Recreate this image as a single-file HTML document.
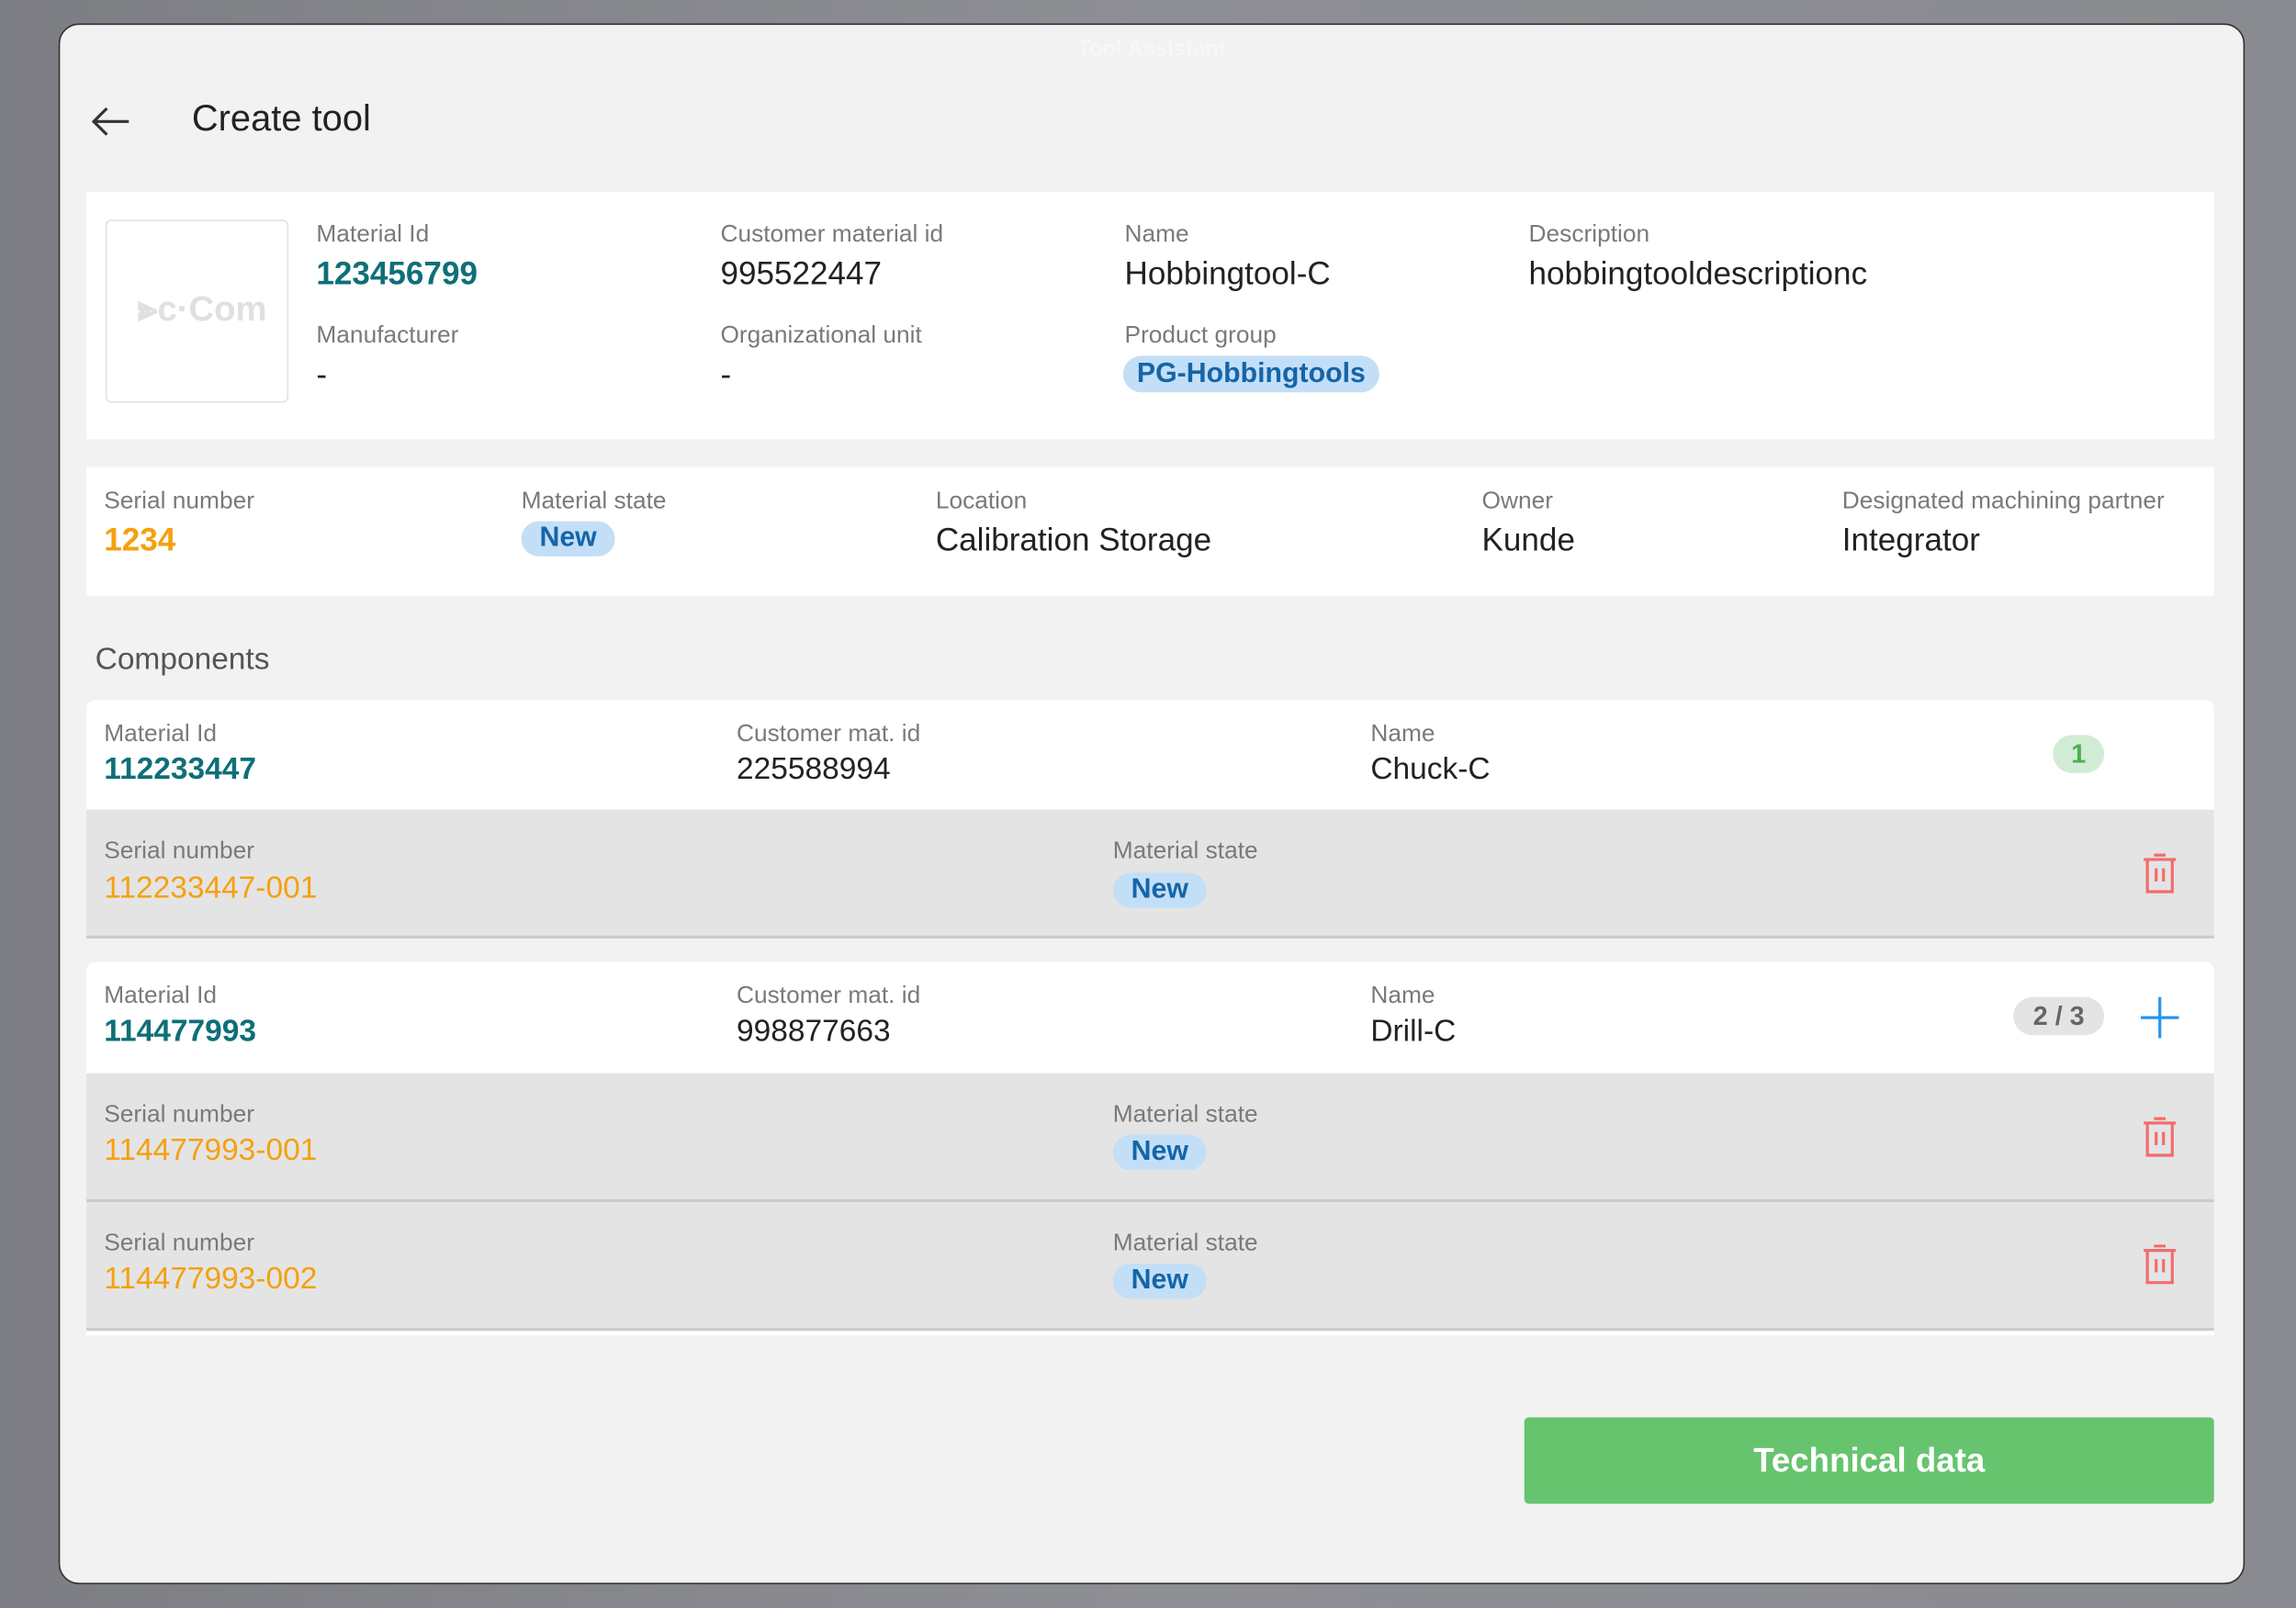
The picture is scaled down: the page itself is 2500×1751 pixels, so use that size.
<!DOCTYPE html>
<html><head><meta charset="utf-8"><style>
html,body{margin:0;padding:0;width:2500px;height:1750px;overflow:hidden;background:linear-gradient(90deg,#7d7e83,#8e8f94 50%,#8a8b90);}
#s{position:absolute;left:0;top:0;width:1568px;height:1098px;transform:scale(1.59439);transform-origin:0 0;font-family:"Liberation Sans",Arial,sans-serif;}
.win{position:absolute;left:40px;top:16px;width:1491px;height:1064px;background:#f2f2f2;border:1px solid #333;border-radius:14px;overflow:hidden;}
.a{position:absolute;white-space:nowrap;}
.l{font-size:16.5px;color:#7a7a7a;}
.v{font-size:22px;color:#222;}
.t{color:#0e6f78;font-weight:bold;}
.o{color:#f5a00f;}
.card{position:absolute;background:#fff;}
.pill{position:absolute;background:#c3dff7;color:#1565a8;font-weight:bold;border-radius:14px;font-size:19px;text-align:center;}
.row{position:absolute;left:59px;width:1453px;background:#e4e4e4;border-bottom:2px solid #ccc;}
</style></head><body><div id="s">
<div class="win">
<div class="a" style="left:0;width:1491px;text-align:center;top:8px;color:#f7f7f7;font-size:15px;font-weight:bold">Tool Assistant</div>
</div>
<svg class="a" style="left:60px;top:70px" width="32" height="26" viewBox="0 0 32 26"><path d="M28 13H4M13 4L4 13L13 22" stroke="#333" stroke-width="2" fill="none"/></svg>
<div class="a" style="left:131px;top:67px;font-size:25px;color:#222">Create tool</div>

<div class="card" style="left:59px;top:131px;width:1453px;height:169px"></div>
<div class="a" style="left:72px;top:150px;width:123px;height:123px;border:1px solid #e2e2e2;border-radius:4px;background:#fff"></div>
<div class="a" style="left:94px;top:198px;font-size:24px;color:#e0e0e0;font-weight:bold">⫸c·Com</div>
<div class="a l" style="left:216px;top:151px">Material Id</div>
<div class="a v t" style="left:216px;top:174px">123456799</div>
<div class="a l" style="left:216px;top:220px">Manufacturer</div>
<div class="a v" style="left:216px;top:243px">-</div>
<div class="a l" style="left:492px;top:151px">Customer material id</div>
<div class="a v" style="left:492px;top:174px">995522447</div>
<div class="a l" style="left:492px;top:220px">Organizational unit</div>
<div class="a v" style="left:492px;top:243px">-</div>
<div class="a l" style="left:768px;top:151px">Name</div>
<div class="a v" style="left:768px;top:174px">Hobbingtool-C</div>
<div class="a l" style="left:768px;top:220px">Product group</div>
<div class="pill" style="left:767px;top:243px;width:175px;height:25px;line-height:25px">PG-Hobbingtools</div>
<div class="a l" style="left:1044px;top:151px">Description</div>
<div class="a v" style="left:1044px;top:174px">hobbingtooldescriptionc</div>

<div class="card" style="left:59px;top:319px;width:1453px;height:88px"></div>
<div class="a l" style="left:71px;top:333px">Serial number</div>
<div class="a v o" style="left:71px;top:356px;font-weight:bold">1234</div>
<div class="a l" style="left:356px;top:333px">Material state</div>
<div class="pill" style="left:356px;top:356px;width:64px;height:24px;line-height:24px">New</div>
<div class="a l" style="left:639px;top:333px">Location</div>
<div class="a v" style="left:639px;top:356px">Calibration Storage</div>
<div class="a l" style="left:1012px;top:333px">Owner</div>
<div class="a v" style="left:1012px;top:356px">Kunde</div>
<div class="a l" style="left:1258px;top:333px">Designated machining partner</div>
<div class="a v" style="left:1258px;top:356px">Integrator</div>

<div class="a" style="left:65px;top:439px;font-size:21px;color:#555">Components</div>

<!-- comp 1 -->
<div class="card" style="left:59px;top:478px;width:1453px;height:75px;border-radius:6px 6px 0 0"></div>
<div class="a l" style="left:71px;top:492px">Material Id</div>
<div class="a v t" style="left:71px;top:514px;font-size:21px">112233447</div>
<div class="a l" style="left:503px;top:492px">Customer mat. id</div>
<div class="a v" style="left:503px;top:514px;font-size:21px">225588994</div>
<div class="a l" style="left:936px;top:492px">Name</div>
<div class="a v" style="left:936px;top:514px;font-size:21px">Chuck-C</div>
<div class="pill" style="left:1402px;top:502px;width:35px;height:26px;line-height:26px;background:#d1ecd4;color:#4caf50;font-size:18px">1</div>
<div class="row" style="top:553px;height:86px"></div>
<div class="a l" style="left:71px;top:572px">Serial number</div>
<div class="a v o" style="left:71px;top:595px;font-size:21px">112233447-001</div>
<div class="a l" style="left:760px;top:572px">Material state</div>
<div class="pill" style="left:760px;top:596px;width:64px;height:24px;line-height:24px">New</div>

<!-- comp 2 -->
<div class="card" style="left:59px;top:657px;width:1453px;height:76px;border-radius:6px 6px 0 0"></div>
<div class="a l" style="left:71px;top:671px">Material Id</div>
<div class="a v t" style="left:71px;top:693px;font-size:21px">114477993</div>
<div class="a l" style="left:503px;top:671px">Customer mat. id</div>
<div class="a v" style="left:503px;top:693px;font-size:21px">998877663</div>
<div class="a l" style="left:936px;top:671px">Name</div>
<div class="a v" style="left:936px;top:693px;font-size:21px">Drill-C</div>
<div class="pill" style="left:1375px;top:681px;width:62px;height:26px;line-height:26px;background:#e4e4e4;color:#666;font-size:18px">2 / 3</div>
<svg class="a" style="left:1461px;top:680px" width="28" height="30"><path d="M14 1V29M1 15H27" stroke="#2196f3" stroke-width="2"/></svg>
<div class="row" style="top:733px;height:86px"></div>
<div class="a l" style="left:71px;top:752px">Serial number</div>
<div class="a v o" style="left:71px;top:774px;font-size:21px">114477993-001</div>
<div class="a l" style="left:760px;top:752px">Material state</div>
<div class="pill" style="left:760px;top:775px;width:64px;height:24px;line-height:24px">New</div>
<div class="row" style="top:821px;height:86px"></div>
<div class="a l" style="left:71px;top:840px">Serial number</div>
<div class="a v o" style="left:71px;top:862px;font-size:21px">114477993-002</div>
<div class="a l" style="left:760px;top:840px">Material state</div>
<div class="pill" style="left:760px;top:863px;width:64px;height:24px;line-height:24px">New</div>
<div class="a" style="left:59px;top:909px;width:1453px;height:3px;background:#fff"></div>

<svg class="a" style="left:1463px;top:583px" width="24" height="28" viewBox="0 0 24 28"><path d="M8 1H16M1 4H23M3.5 4V26H20.5V4M9.5 10V19M14.5 10V19" stroke="#f36b6b" stroke-width="2" fill="none"/></svg>
<svg class="a" style="left:1463px;top:763px" width="24" height="28" viewBox="0 0 24 28"><path d="M8 1H16M1 4H23M3.5 4V26H20.5V4M9.5 10V19M14.5 10V19" stroke="#f36b6b" stroke-width="2" fill="none"/></svg>
<svg class="a" style="left:1463px;top:850px" width="24" height="28" viewBox="0 0 24 28"><path d="M8 1H16M1 4H23M3.5 4V26H20.5V4M9.5 10V19M14.5 10V19" stroke="#f36b6b" stroke-width="2" fill="none"/></svg>

<div class="a" style="left:1041px;top:968px;width:471px;height:59px;background:#66c46e;border-radius:3px;color:#fff;font-size:23px;font-weight:bold;text-align:center;line-height:59px">Technical data</div>
</div></body></html>
